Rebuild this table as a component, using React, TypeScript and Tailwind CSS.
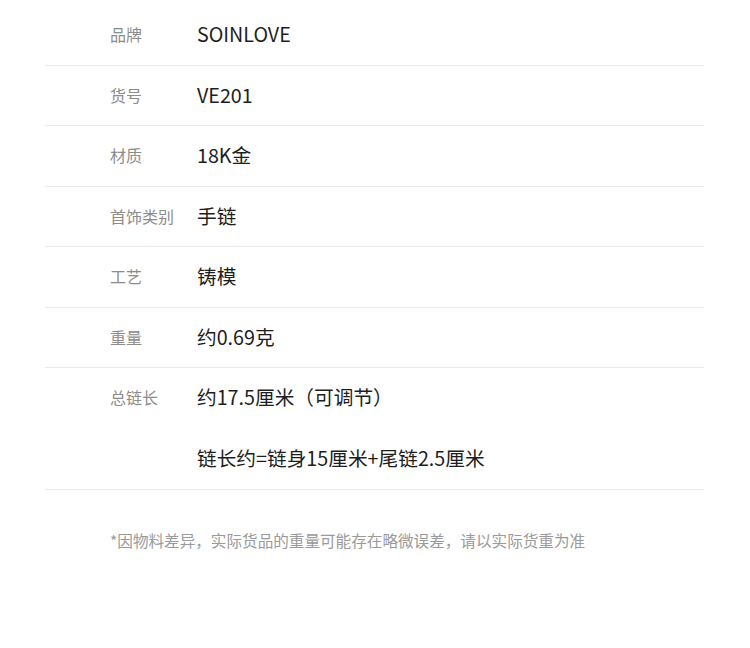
const rows: { label: string; values: string[] }[] = [
  { label: '品牌', values: ['SOINLOVE'] },
  { label: '货号', values: ['VE201'] },
  { label: '材质', values: ['18K金'] },
  { label: '首饰类别', values: ['手链'] },
  { label: '工艺', values: ['铸模'] },
  { label: '重量', values: ['约0.69克'] },
  { label: '总链长', values: ['约17.5厘米（可调节）', '链长约=链身15厘米+尾链2.5厘米'] },
];

export default function App() {
  return (
    <div className="w-[750px] h-[648px] bg-white font-['Noto_Sans_CJK_SC','Noto_Sans',sans-serif] pt-[5px]">
      <div className="ml-[45px] w-[659px]">
        {rows.map((row) => (
          <div key={row.label} className="flex border-b border-[#ebebeb]">
            <div className="w-[152px] pl-[65px] h-[59.5px] pb-[1px] flex items-center text-[16px] text-[#8c8c8c]">
              {row.label}
            </div>
            <div className="flex flex-col">
              {row.values.map((v, i) => (
                <div
                  key={i}
                  className={`flex items-center pb-[1px] text-[19.7px] text-[#1e1e1e] ${i > 0 ? 'h-[61px]' : 'h-[59.5px]'}`}
                >
                  {v}
                </div>
              ))}
            </div>
          </div>
        ))}
        <div className="pl-[65px] pt-[39px] text-[15.6px] text-[#9a9a9a]">
          *因物料差异，实际货品的重量可能存在略微误差，请以实际货重为准
        </div>
      </div>
    </div>
  );
}
